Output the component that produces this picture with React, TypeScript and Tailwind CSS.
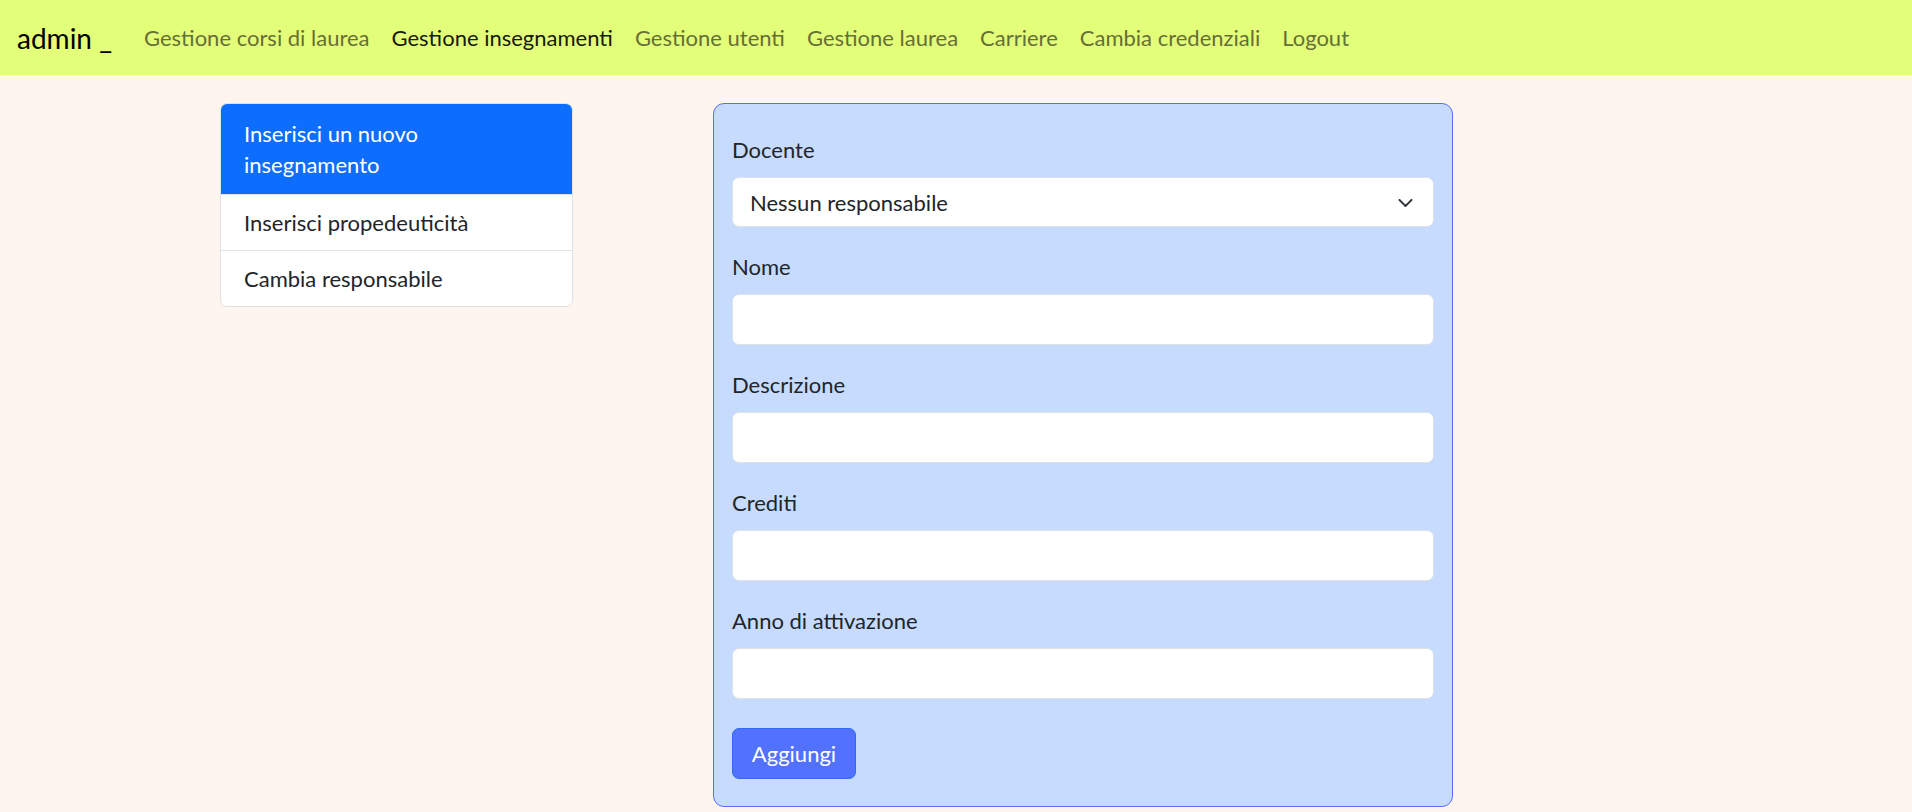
import React, { useState } from 'react';

const links = [
  { label: 'Gestione corsi di laurea', active: false },
  { label: 'Gestione insegnamenti', active: true },
  { label: 'Gestione utenti', active: false },
  { label: 'Gestione laurea', active: false },
  { label: 'Carriere', active: false },
  { label: 'Cambia credenziali', active: false },
  { label: 'Logout', active: false },
];

const menu = ['Inserisci un nuovo insegnamento', 'Inserisci propedeuticità', 'Cambia responsabile'];

const fields = ['Nome', 'Descrizione', 'Crediti', 'Anno di attivazione'];

export default function App() {
  const [selected, setSelected] = useState(0);
  const [docente, setDocente] = useState('');

  return (
    <div className="min-h-screen bg-[#fef5ef] font-['Lato','Liberation_Sans',sans-serif] text-[#212529]">
      <nav className="flex h-[75px] items-center bg-[#e3fe79] pl-[17px]">
        <span className="mr-[32px] text-[28px] leading-none text-black">admin _</span>
        <ul className="flex items-center gap-[22px] text-[22px]">
          {links.map((l) => (
            <li key={l.label} className={l.active ? 'text-[#161a0c]' : 'text-[#666f36]'}>
              {l.label}
            </li>
          ))}
        </ul>
      </nav>

      <div className="flex items-start gap-[140px] pl-[220px] pt-[28px]">
        <div className="w-[353px] overflow-hidden rounded-[7px] border border-[#dee2e6] bg-white text-[22px] leading-[31px]">
          {menu.map((m, i) => (
            <button
              key={m}
              type="button"
              onClick={() => setSelected(i)}
              className={
                i === selected
                  ? 'block w-full bg-[#0d6efd] px-[23px] py-[14px] pr-[90px] text-left text-white'
                  : 'block w-full border-t border-[#dee2e6] px-[23px] py-[12px] text-left'
              }
            >
              {m}
            </button>
          ))}
        </div>

        <form
          className="w-[740px] rounded-[11px] border border-[#5a6bff] bg-[#c6dbfe] px-[18px] pb-[27px] pt-[30px] text-[22px]"
          onSubmit={(e) => e.preventDefault()}
        >
          <label className="mb-[12px] block leading-[31px]">Docente</label>
          <div className="relative mb-[24px]">
            <select
              value={docente}
              onChange={(e) => setDocente(e.target.value)}
              className="block h-[50px] w-full appearance-none rounded-[7px] border border-[#dee2e6] bg-white pl-[17px] text-[22px] outline-none"
            >
              <option value="">Nessun responsabile</option>
            </select>
            <svg
              className="pointer-events-none absolute right-[21px] top-[22px] h-[8px] w-[15px]"
              viewBox="0 0 15 8"
              fill="none"
              stroke="#343a40"
              strokeWidth={2}
              strokeLinecap="round"
              strokeLinejoin="round"
            >
              <path d="M1.5 1l6 6 6-6" />
            </svg>
          </div>

          {fields.map((f, i) => (
            <div key={f} className={i === fields.length - 1 ? 'mb-[29px]' : 'mb-[24px]'}>
              <label className="mb-[12px] block leading-[31px]">{f}</label>
              <input
                type="text"
                className="block h-[51px] w-full rounded-[7px] border border-[#dee2e6] bg-white px-[17px] outline-none"
              />
            </div>
          ))}

          <button
            type="submit"
            className="h-[51px] w-[124px] rounded-[7px] border border-[#2f6bf5] bg-[#5271ff] text-[22px] text-white"
          >
            Aggiungi
          </button>
        </form>
      </div>
    </div>
  );
}
